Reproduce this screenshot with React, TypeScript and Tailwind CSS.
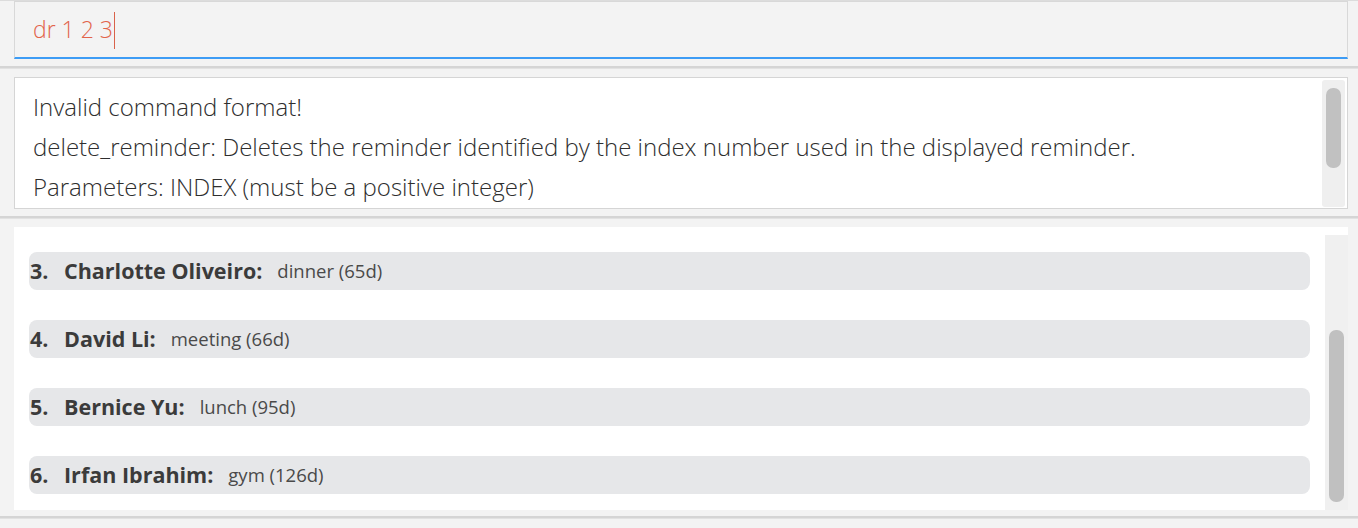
const reminders = [
  { idx: 3, name: "Charlotte Oliveiro:", desc: "dinner (65d)" },
  { idx: 4, name: "David Li:", desc: "meeting (66d)" },
  { idx: 5, name: "Bernice Yu:", desc: "lunch (95d)" },
  { idx: 6, name: "Irfan Ibrahim:", desc: "gym (126d)" },
];

const Divider = () => (
  <div className="h-[3px] bg-[#d5d5d5] border-b border-[#e2e2e2]" />
);

const CommandBox = () => (
  <div className="pl-[14px] pr-[10px]">
    <div className="h-[58px] bg-[#f3f3f3] border border-b-2 border-[#d8d8d8] border-b-[#3d9cf5] flex items-center pl-[18px]">
      <span className="text-[23px] font-light text-[#e2634a] leading-none">
        dr 1 2 3
      </span>
      <span className="w-px h-[37px] bg-[#d9624a] ml-[1px] mt-[2px]" />
    </div>
  </div>
);

const ResultBox = () => (
  <div className="pl-[14px] pr-[10px]">
    <div className="h-[132px] bg-white border border-[#d5d5d5] flex overflow-hidden">
      <div className="flex-1 pl-[18px] pt-[9px] text-[24px] font-light leading-[40px] text-[#2e2e2e] whitespace-nowrap overflow-hidden">
        <div>Invalid command format!</div>
        <div>
          delete_reminder: Deletes the reminder identified by the index number
          used in the displayed reminder.
        </div>
        <div>Parameters: INDEX (must be a positive integer)</div>
      </div>
      <div className="w-[23px] mt-[2px] mb-[1px] mr-[2px] bg-[#efefef] rounded-[3px] flex justify-center">
        <div className="w-[15px] h-[80px] mt-[8px] bg-[#c1c1c1] rounded-[7px]" />
      </div>
    </div>
  </div>
);

const ReminderList = () => (
  <div className="pl-[14px] pr-[10px]">
    <div className="h-[283px] bg-white flex">
      <div className="flex-1 pl-[15px] pr-[15px] pt-[25px] flex flex-col gap-[30px]">
        {reminders.map((r) => (
          <div
            key={r.idx}
            className="h-[38px] bg-[#e6e7e9] rounded-[8px] flex items-center text-[#3b3b3b]"
          >
            <span className="text-[21.5px] font-bold w-[35px] pl-[1px]">
              {r.idx}.
            </span>
            <span className="text-[21.5px] font-bold">{r.name}</span>
            <span className="text-[18.5px] text-[#4a4a4a] ml-[15px]">
              {r.desc}
            </span>
          </div>
        ))}
      </div>
      <div className="w-[23px] mt-[8px] bg-[#f0f0f0] flex justify-center">
        <div className="w-[15px] h-[172px] mt-[95px] bg-[#c0c0c0] rounded-[7px]" />
      </div>
    </div>
  </div>
);

export default function App() {
  return (
    <div
      className="w-full h-[528px] bg-[#f3f3f3] flex flex-col overflow-hidden"
      style={{ fontFamily: '"Open Sans", "Noto Sans", sans-serif' }}
    >
      <div className="h-px bg-[#dcdcdc]" />
      <CommandBox />
      <div className="h-[7px]" />
      <Divider />
      <div className="h-[8px]" />
      <ResultBox />
      <div className="h-[7px]" />
      <Divider />
      <div className="h-[8px]" />
      <ReminderList />
      <div className="h-[6px]" />
      <Divider />
    </div>
  );
}
